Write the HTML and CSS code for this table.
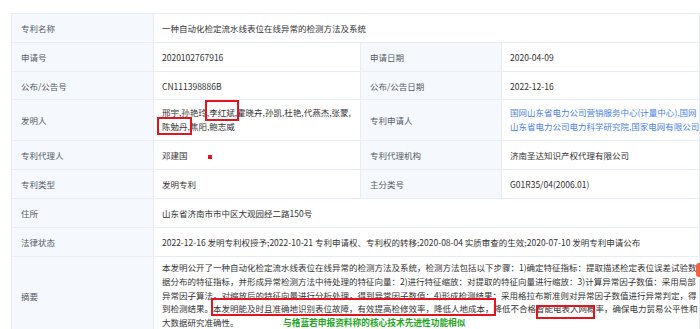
FILE: index.html
```html
<!DOCTYPE html>
<html lang="zh-CN">
<head>
<meta charset="utf-8">
<title>专利详情</title>
<link rel="stylesheet" href="styles.css">
</head>
<body>
<div class="page">
  <div class="desc">
    <div class="lbl">专利名称</div>
    <div class="val span3">一种自动化检定流水线表位在线异常的检测方法及系统</div>

    <div class="lbl">申请号</div>
    <div class="val">2020102767916</div>
    <div class="lbl">申请日期</div>
    <div class="val">2020-04-09</div>

    <div class="lbl">公布/公告号</div>
    <div class="val">CN111398886B</div>
    <div class="lbl">公布/公告日期</div>
    <div class="val">2022-12-16</div>

    <div class="lbl">发明人</div>
    <div class="val multi">邢宇,孙艳玲,<span class="mark m1">李红斌</span>,霍晓卉,孙凯,杜艳,代燕杰,张蒙,<br><span class="mark m2">陈勉丹</span>,焦阳,鲍志威</div>
    <div class="lbl">专利申请人</div>
    <div class="val multi link">国网山东省电力公司营销服务中心(计量中心),国网<br>山东省电力公司电力科学研究院,国家电网有限公司</div>

    <div class="lbl">专利代理人</div>
    <div class="val dotcell">邓建国<span class="dot"></span></div>
    <div class="lbl">专利代理机构</div>
    <div class="val">济南圣达知识产权代理有限公司</div>

    <div class="lbl">专利类型</div>
    <div class="val">发明专利</div>
    <div class="lbl">主分类号</div>
    <div class="val">G01R35/04(2006.01)</div>

    <div class="lbl">住所</div>
    <div class="val span3">山东省济南市市中区大观园经二路150号</div>

    <div class="lbl">法律状态</div>
    <div class="val span3">2022-12-16 发明专利权授予;2022-10-21 专利申请权、专利权的转移;2020-08-04 实质审查的生效;2020-07-10 发明专利申请公布</div>

    <div class="lbl">摘要</div>
    <div class="val span3 abstract">本发明公开了一种自动化检定流水线表位在线异常的检测方法及系统，检测方法包括以下步骤：1)确定特征指标：提取描述检定表位误差试验数<br>据分布的特征指标，并形成异常检测方法中待处理的特征向量：2)进行特征缩放：对提取的特征向量进行缩放：3)计算异常因子数值：采用局部<br>异常因子算法，对缩放后的特征向量进行分析处理，得到异常因子数值：4)形成检测结果：采用格拉布斯准则对异常因子数值进行异常判定，得<br>到检测结果。<span class="mark m3">本发明能及时且准确地识别表位故障，有效提高检修效率，降低人地成本，</span>降低不合格<span class="mark m4">智能电表入网</span>概率，确保电力贸易公平性和<br>大数据研究准确性。<span class="note">与格蓝若申报资料称的核心技术先进性功能相似</span></div>
  </div>
  <div class="float-tab"></div>
</div>
</body>
</html>
```

FILE: styles.css
```css
html, body {
  margin: 0;
  padding: 0;
  background: #ffffff;
  overflow: hidden;
}

.page {
  position: relative;
  box-sizing: border-box;
  padding: 13px 0 0 11px;
  width: 700px;
  height: 329px;
  overflow: hidden;
  font-family: "Noto Sans CJK SC", "Noto Sans", sans-serif;
  font-size: 8.5px;
  color: #333333;
}

.desc {
  display: grid;
  grid-template-columns: 142px 207px 141px 198px;
  grid-template-rows: 29px 29px 28px 41px 29px 29px 29px 29px 78px;
  border-top: 1px solid #e7edf6;
  border-left: 1px solid #e7edf6;
}

.lbl,
.val {
  box-sizing: border-box;
  display: flex;
  align-items: center;
  border-right: 1px solid #e7edf6;
  border-bottom: 1px solid #e7edf6;
  padding: 0 8px;
  white-space: nowrap;
}

.lbl {
  background: #f5f8fd;
  color: #555b66;
  padding-left: 9px;
}

.val {
  background: #ffffff;
  color: #333333;
}

.span3 {
  grid-column: span 3;
}

.multi {
  display: block;
  line-height: 14px;
  padding-top: 5px;
}

.link {
  color: #4a80e8;
}

.abstract {
  display: block;
  line-height: 13.8px;
  padding-top: 4px;
  position: relative;
}

.mark {
  position: relative;
}

.mark::after {
  content: "";
  position: absolute;
  border: 2px solid #e5131b;
}

.m1::after { top: -6px; bottom: -3px; left: -4px; right: -4px; }
.m2::after { top: -3px; bottom: -3px; left: -5px; right: -4px; }
.m3::after { top: -4px; bottom: -2px; left: -2px; right: -2px; }
.m4::after { top: 3px; bottom: -5px; left: 0; right: -8px; }

.dotcell {
  position: relative;
}

.dot {
  position: absolute;
  left: 54px;
  top: 14px;
  width: 4px;
  height: 4px;
  background: #e5131b;
}

.note {
  position: absolute;
  left: 129px;
  top: 59px;
  color: #23a623;
  font-weight: bold;
  font-size: 8.7px;
}

.float-tab {
  position: absolute;
  left: 696px;
  top: 263px;
  width: 12px;
  height: 14px;
  border-radius: 3px;
  background: #f26434;
}
```
